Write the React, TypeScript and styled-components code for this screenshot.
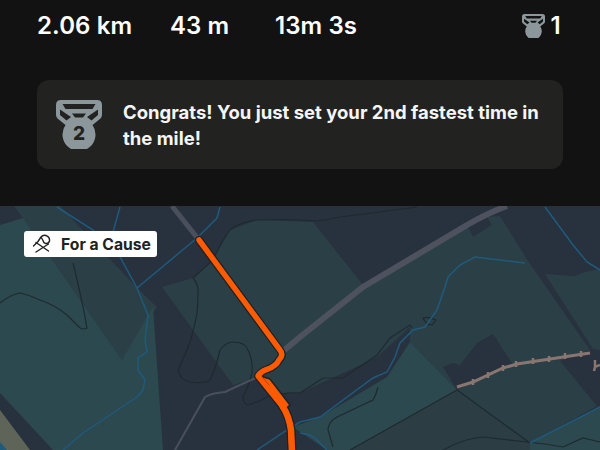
import styled, { createGlobalStyle } from 'styled-components';

const GlobalStyle = createGlobalStyle`
  html, body {
    margin: 0;
    padding: 0;
    background: #121212;
    overflow: hidden;
  }
`;

const Page = styled.div`
  width: 600px;
  height: 450px;
  display: flex;
  flex-direction: column;
  font-family: 'Inter', 'Liberation Sans', sans-serif;
  color: #fff;
  background: #121212;
`;

const Summary = styled.section`
  height: 206px;
  flex: none;
  box-sizing: border-box;
  padding: 10px 37px 0;
  display: flex;
  flex-direction: column;
  gap: 38px;
`;

const StatsRow = styled.div`
  height: 32px;
  display: grid;
  grid-template-columns: 133px 105px 1fr auto;
  align-items: center;
`;

const Stat = styled.div`
  font-size: 24px;
  font-weight: 600;
  line-height: 32px;
  letter-spacing: 0.1px;
  white-space: nowrap;
`;

const AchievementCount = styled(Stat)`
  display: flex;
  align-items: center;
  gap: 3px;
`;

const CountValue = styled.span`
  width: 15px;
  text-align: center;
`;

const Banner = styled.div`
  height: 89px;
  box-sizing: border-box;
  padding: 18px 19px;
  display: flex;
  gap: 21px;
  align-items: center;
  background: #222221;
  border-radius: 12px;
`;

const BannerText = styled.p`
  margin: 0;
  font-size: 18.5px;
  font-weight: 700;
  line-height: 26px;
  color: #f5f5f5;
`;

const MapArea = styled.section`
  position: relative;
  flex: 1;
  overflow: hidden;
  background: #28313e;
`;

const MapDrawing = styled.svg`
  display: block;
  width: 600px;
  height: 244px;
`;

const SportTag = styled.div`
  position: absolute;
  left: 24px;
  top: 25px;
  width: 133px;
  height: 26px;
  box-sizing: border-box;
  padding-left: 9px;
  display: flex;
  align-items: center;
  gap: 8px;
  background: #fff;
  border-radius: 3px;
  color: #222;
  font-size: 15.7px;
  font-weight: 700;
  white-space: nowrap;
`;

function Medal({ width, rank }: { width: number; rank?: string }) {
  return (
    <svg width={width} viewBox="0 0 46 49" style={{ flex: 'none', display: 'block' }}>
      <path
        d="M5 0H41Q46 0 46 5V15Q46 17 44.5 18.4L36.5 25A16.5 16.5 0 1 1 9.5 25L1.5 18.4Q0 17 0 15V5Q0 0 5 0Z"
        fill="#8c979c"
      />
      <path
        d="M6.5 4H39.5L36.5 9H9.5ZM16 13.5H30L27 17.5H19ZM4 9.5V15L10.5 20.5L15 17ZM42 9.5V15L35.5 20.5L31 17Z"
        fill={rank ? '#222221' : '#121212'}
      />
      {rank && (
        <text x="23" y="40" textAnchor="middle" fontFamily="Inter, sans-serif" fontWeight="800" fontSize="19" fill="#222221">
          {rank}
        </text>
      )}
    </svg>
  );
}

function CauseIcon() {
  return (
    <svg width="20" height="20" viewBox="0 0 20 20" fill="none" stroke="#222" strokeWidth="1.4" strokeLinecap="round" strokeLinejoin="round">
      <path d="M0.5 12L5 7.5L8 3Q10 0.5 13 1.5Q17 3 16.5 7Q15.5 10 12.5 9.5Q10.5 9 10 6.5L8 3" />
      <path d="M3 8.5L15.5 17M15.5 10L3 18" />
    </svg>
  );
}

const BLUE_LINES = [
  'M57 207L93 230L120 257L137 288L148 315L145 340L147 352L138 358L138 370L145 380L143 390L137 397L83 433L63 450',
  'M120 207L113 232',
  'M137 288L197 238L217 218L220 207',
  'M257 450L287 430L300 422L320 417L373 378L387 372L395 357L400 343L413 330L425 327L437 310L445 287L448 277L460 265L475 257L525 263',
  'M545 207L573 245L587 262L600 270',
  'M530 443L600 407',
  'M300 433L310 435L316 439L327 450',
];

const TRAILS = [
  'M0 303Q10 295 20 293Q30 295 40 300Q55 305 67 315L80 328Q84 330 87 328Q84 310 80 293Q76 275 73 263',
  'M193 278Q198 284 198 290Q198 305 197 313Q193 335 187 350L178 370Q180 380 190 382Q205 384 210 380Q216 368 220 350Q226 342 233 342Q245 342 248 350Q253 360 252 373Q248 388 243 397Q243 404 248 405Q258 402 267 397Q285 392 300 393',
  'M193 278L213 260Q222 240 230 230Q240 222 257 220Q280 219 300 220Q320 222 333 218L417 207',
  'M300 393L323 378Q333 378 343 378L377 355L390 338L410 325L412 328',
  'M378 387Q376 395 373 400L337 417Q328 422 328 430L333 447',
  'M443 450Q465 438 483 437L527 442L545 444L563 447L583 438L600 442',
  'M457 390L530 443',
  'M457 390L350 450',
  'M423 318Q428 316 436 320L432 325Q426 325 423 318Z',
];

const FENCE_TICKS: [number, number][] = [
  [473, 382],
  [488, 375],
  [503, 368],
  [516, 364],
  [533, 361],
  [549, 359],
  [565, 356],
  [581, 354],
];

const ROUTE = 'M199 240L280 350Q284 355 279 360Q276 366 268 369Q261 371 258 376L283 407Q289 416 291 430L292 452';
const ROUTE_END = 'M283 407Q289 416 291 430L292 452';

export default function App() {
  return (
    <Page>
      <GlobalStyle />
      <Summary>
        <StatsRow>
          <Stat>2.06 km</Stat>
          <Stat>43 m</Stat>
          <Stat>13m 3s</Stat>
          <AchievementCount>
            <Medal width={23} />
            <CountValue>1</CountValue>
          </AchievementCount>
        </StatsRow>
        <Banner>
          <Medal width={46} rank="2" />
          <BannerText>Congrats! You just set your 2nd fastest time in the mile!</BannerText>
        </Banner>
      </Summary>
      <MapArea>
        <MapDrawing viewBox="0 206 600 244">
          {/* land cover */}
          <path d="M14 206H60L137 288L157 307L122 360L23 218Z" fill="#2b4046" />
          <path d="M23 218L122 360L153 307L163 450H53L0 393V225Z" fill="#2c494f" />
          <path
            d="M162 287L193 278L213 260L230 230L257 220L313 222L363 285L467 225L473 237L492 225L487 217L500 216L528 261L590 350L560 361L597 406L530 443L457 390L410 342L300 393L270 395L258 377L233 385Z"
            fill="#2b4046"
          />
          <path d="M545 274L575 276L585 272L600 269V350L593 349Z" fill="#2b4046" />
          <path d="M300 393L340 377L377 357L410 327L410 342L387 377L320 417L300 422Z" fill="#28313e" />
          <path d="M443 367L453 363L460 365L477 343L493 334L513 365L457 390Z" fill="#28313e" />
          <path d="M410 342L457 390L350 450H327L293 427L320 417L387 377Z" fill="#2c494f" />
          <path d="M457 390L530 443V450H350Z" fill="#2c3e44" />
          <path d="M530 443L600 407V450H530Z" fill="#2c494f" />
          <path d="M0 410L30 450H0Z" fill="#5f6458" />
          <path d="M0 442L7 450H0Z" fill="#1f5a78" />

          {/* trails and water */}
          <g fill="none" stroke="#1e2a30" strokeWidth="1.2">
            {TRAILS.map((d) => (
              <path key={d} d={d} />
            ))}
          </g>
          <g fill="none" stroke="#1f5a7c" strokeWidth="1.5">
            {BLUE_LINES.map((d) => (
              <path key={d} d={d} />
            ))}
          </g>

          {/* roads */}
          <path d="M172 206L199 240" fill="none" stroke="#4a4f5c" strokeWidth="5" />
          <path d="M282 352L300 337L363 287L467 225Q490 212 507 206" fill="none" stroke="#4d525e" strokeWidth="6" />
          <path d="M175 450L205 397Q212 393 225 392L240 385L258 377" fill="none" stroke="#4a4f5c" strokeWidth="2" />

          {/* fence */}
          <g stroke="#8a7670" fill="none">
            <path d="M457 387L473 382L503 368L517 364L550 359L590 353" strokeWidth="3" />
            <path d="M595 360V367L600 365M595 367L594 371" strokeWidth="2.5" />
            {FENCE_TICKS.map(([x, y]) => (
              <path key={x} d={`M${x} ${y - 3}V${y + 3}`} strokeWidth="2.5" />
            ))}
          </g>

          {/* route */}
          <g fill="none" strokeLinecap="round" strokeLinejoin="round">
            <path d={ROUTE} stroke="#1c2226" strokeWidth="8" />
            <path d={ROUTE_END} stroke="#1c2226" strokeWidth="9" />
            <path d="M257 375L270 379L290 405L282 412Z" fill="#fc5a03" stroke="#1c2226" strokeWidth="1.5" />
            <path d={ROUTE} stroke="#fc5a03" strokeWidth="5.5" />
            <path d={ROUTE_END} stroke="#fc5a03" strokeWidth="6.5" />
            <path d="M263 378L269 385" stroke="#b5450f" strokeWidth="1" />
          </g>
        </MapDrawing>
        <SportTag>
          <CauseIcon />
          For a Cause
        </SportTag>
      </MapArea>
    </Page>
  );
}
